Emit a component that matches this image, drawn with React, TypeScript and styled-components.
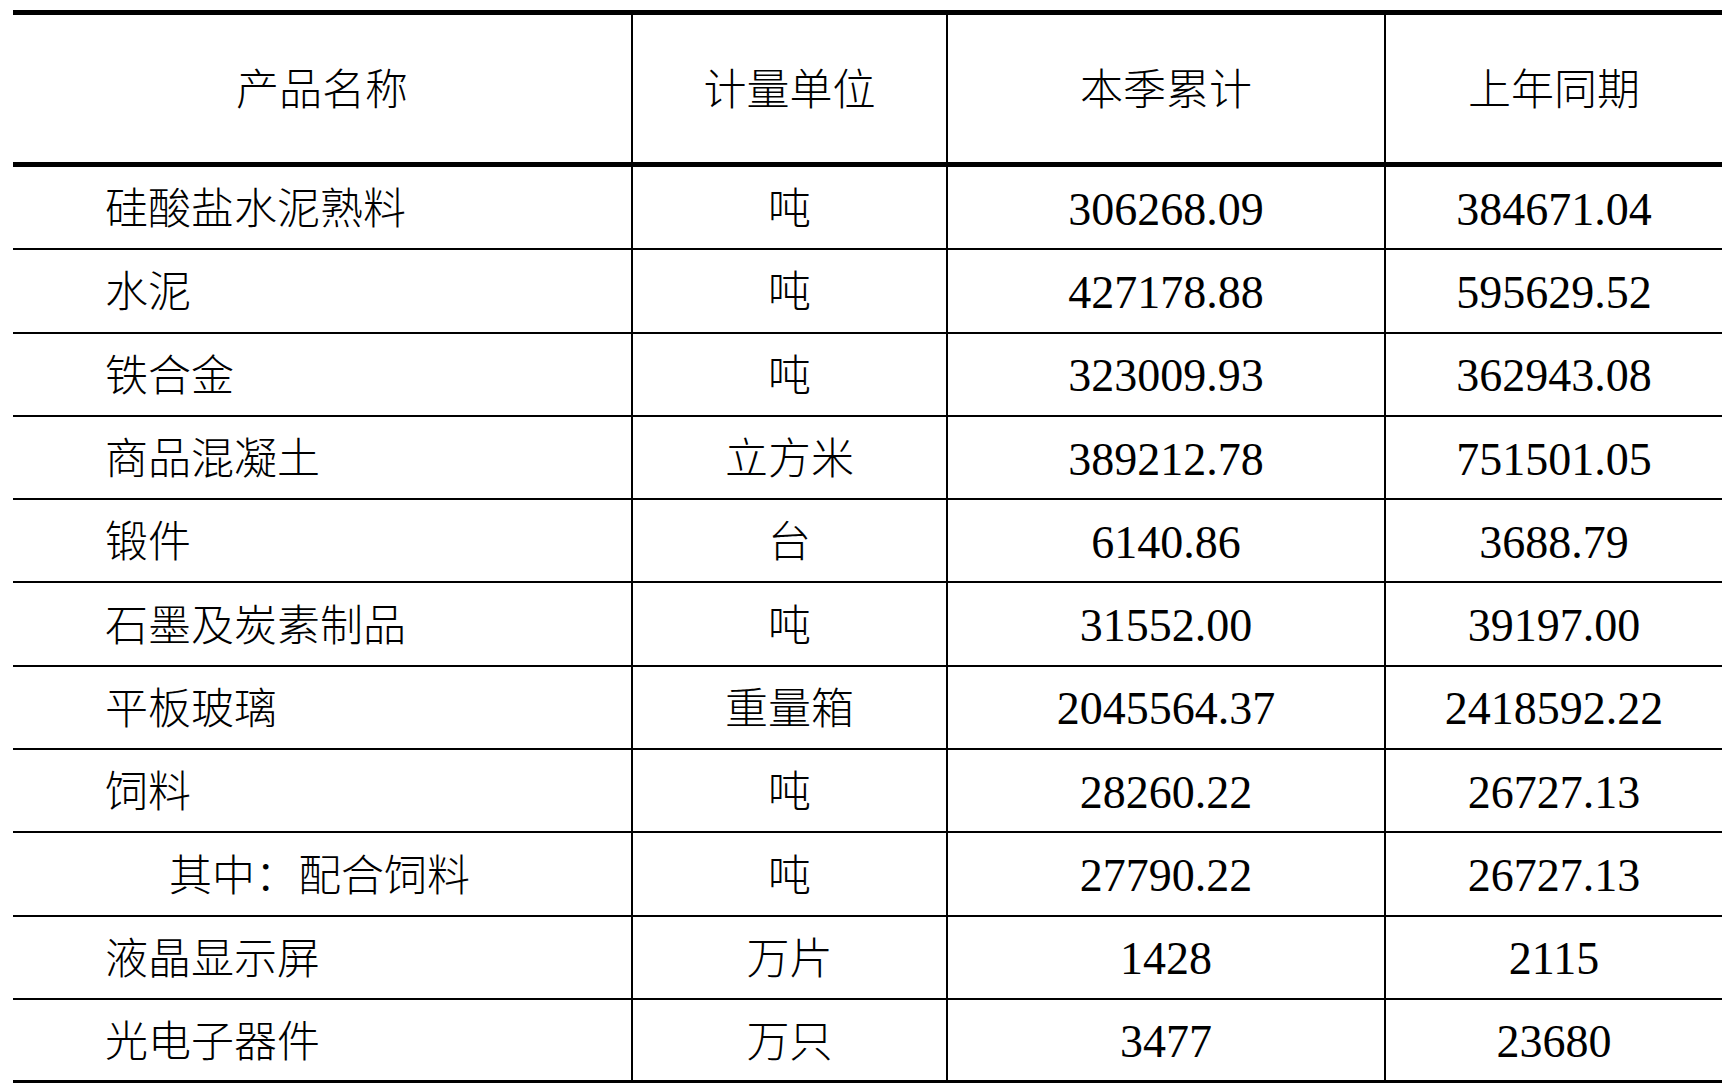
import React from 'react';
import styled, { createGlobalStyle } from 'styled-components';

const GlobalStyle = createGlobalStyle`
    html, body {
        margin: 0;
        padding: 0;
        background: #ffffff;
    }
    body {
        font-family: "Liberation Serif", "Noto Sans CJK SC", serif;
        color: #000000;
    }
`;

const TableStyled = styled.div`
    display: grid;
    grid-template-columns: 620px 315px 438px 336px;
    grid-template-rows: 157px repeat(11, 83.3px);
    width: 1709px;
    margin: 10px 0 0 13px;
    font-family: "Liberation Serif", "Noto Sans CJK SC", serif;
    font-size: 43px;
    font-weight: 300;
    line-height: 1;
`;

const HeadCell = styled.div<{ $last?: boolean }>`
    box-sizing: border-box;
    display: flex;
    align-items: center;
    justify-content: center;
    border-top: 5px solid #000;
    border-bottom: 5px solid #000;
    border-right: ${(p) => (p.$last ? 'none' : '2px solid #000')};
    padding-top: 4px;
    white-space: nowrap;
`;

const Cell = styled.div<{ $align?: 'left' | 'center'; $indent?: number; $last?: boolean; $bottom?: boolean }>`
    box-sizing: border-box;
    display: flex;
    align-items: center;
    justify-content: ${(p) => (p.$align === 'left' ? 'flex-start' : 'center')};
    padding-left: ${(p) => (p.$align === 'left' ? 92 + (p.$indent || 0) : 0)}px;
    padding-top: 4px;
    border-bottom: ${(p) => (p.$bottom ? '3px' : '2px')} solid #000;
    border-right: ${(p) => (p.$last ? 'none' : '2px solid #000')};
    white-space: nowrap;
`;

const NumberText = styled.span`
    font-size: 46px;
    font-weight: 400;
`;

interface RowData {
    name: string;
    unit: string;
    current: string;
    lastYear: string;
    indent?: number;
}

const headers = ['产品名称', '计量单位', '本季累计', '上年同期'];

const rows: RowData[] = [
    { name: '硅酸盐水泥熟料', unit: '吨', current: '306268.09', lastYear: '384671.04' },
    { name: '水泥', unit: '吨', current: '427178.88', lastYear: '595629.52' },
    { name: '铁合金', unit: '吨', current: '323009.93', lastYear: '362943.08' },
    { name: '商品混凝土', unit: '立方米', current: '389212.78', lastYear: '751501.05' },
    { name: '锻件', unit: '台', current: '6140.86', lastYear: '3688.79' },
    { name: '石墨及炭素制品', unit: '吨', current: '31552.00', lastYear: '39197.00' },
    { name: '平板玻璃', unit: '重量箱', current: '2045564.37', lastYear: '2418592.22' },
    { name: '饲料', unit: '吨', current: '28260.22', lastYear: '26727.13' },
    { name: '其中：配合饲料', unit: '吨', current: '27790.22', lastYear: '26727.13', indent: 64 },
    { name: '液晶显示屏', unit: '万片', current: '1428', lastYear: '2115' },
    { name: '光电子器件', unit: '万只', current: '3477', lastYear: '23680' },
];

const App: React.FC = () => {
    return (
        <>
            <GlobalStyle />
            <TableStyled>
                {headers.map((h, i) => (
                    <HeadCell key={h} $last={i === headers.length - 1}>
                        {h}
                    </HeadCell>
                ))}
                {rows.map((r, i) => {
                    const bottom = i === rows.length - 1;
                    return (
                        <React.Fragment key={r.name}>
                            <Cell $align="left" $indent={r.indent} $bottom={bottom}>
                                {r.name}
                            </Cell>
                            <Cell $bottom={bottom}>{r.unit}</Cell>
                            <Cell $bottom={bottom}>
                                <NumberText>{r.current}</NumberText>
                            </Cell>
                            <Cell $bottom={bottom} $last>
                                <NumberText>{r.lastYear}</NumberText>
                            </Cell>
                        </React.Fragment>
                    );
                })}
            </TableStyled>
        </>
    );
};

export default App;
